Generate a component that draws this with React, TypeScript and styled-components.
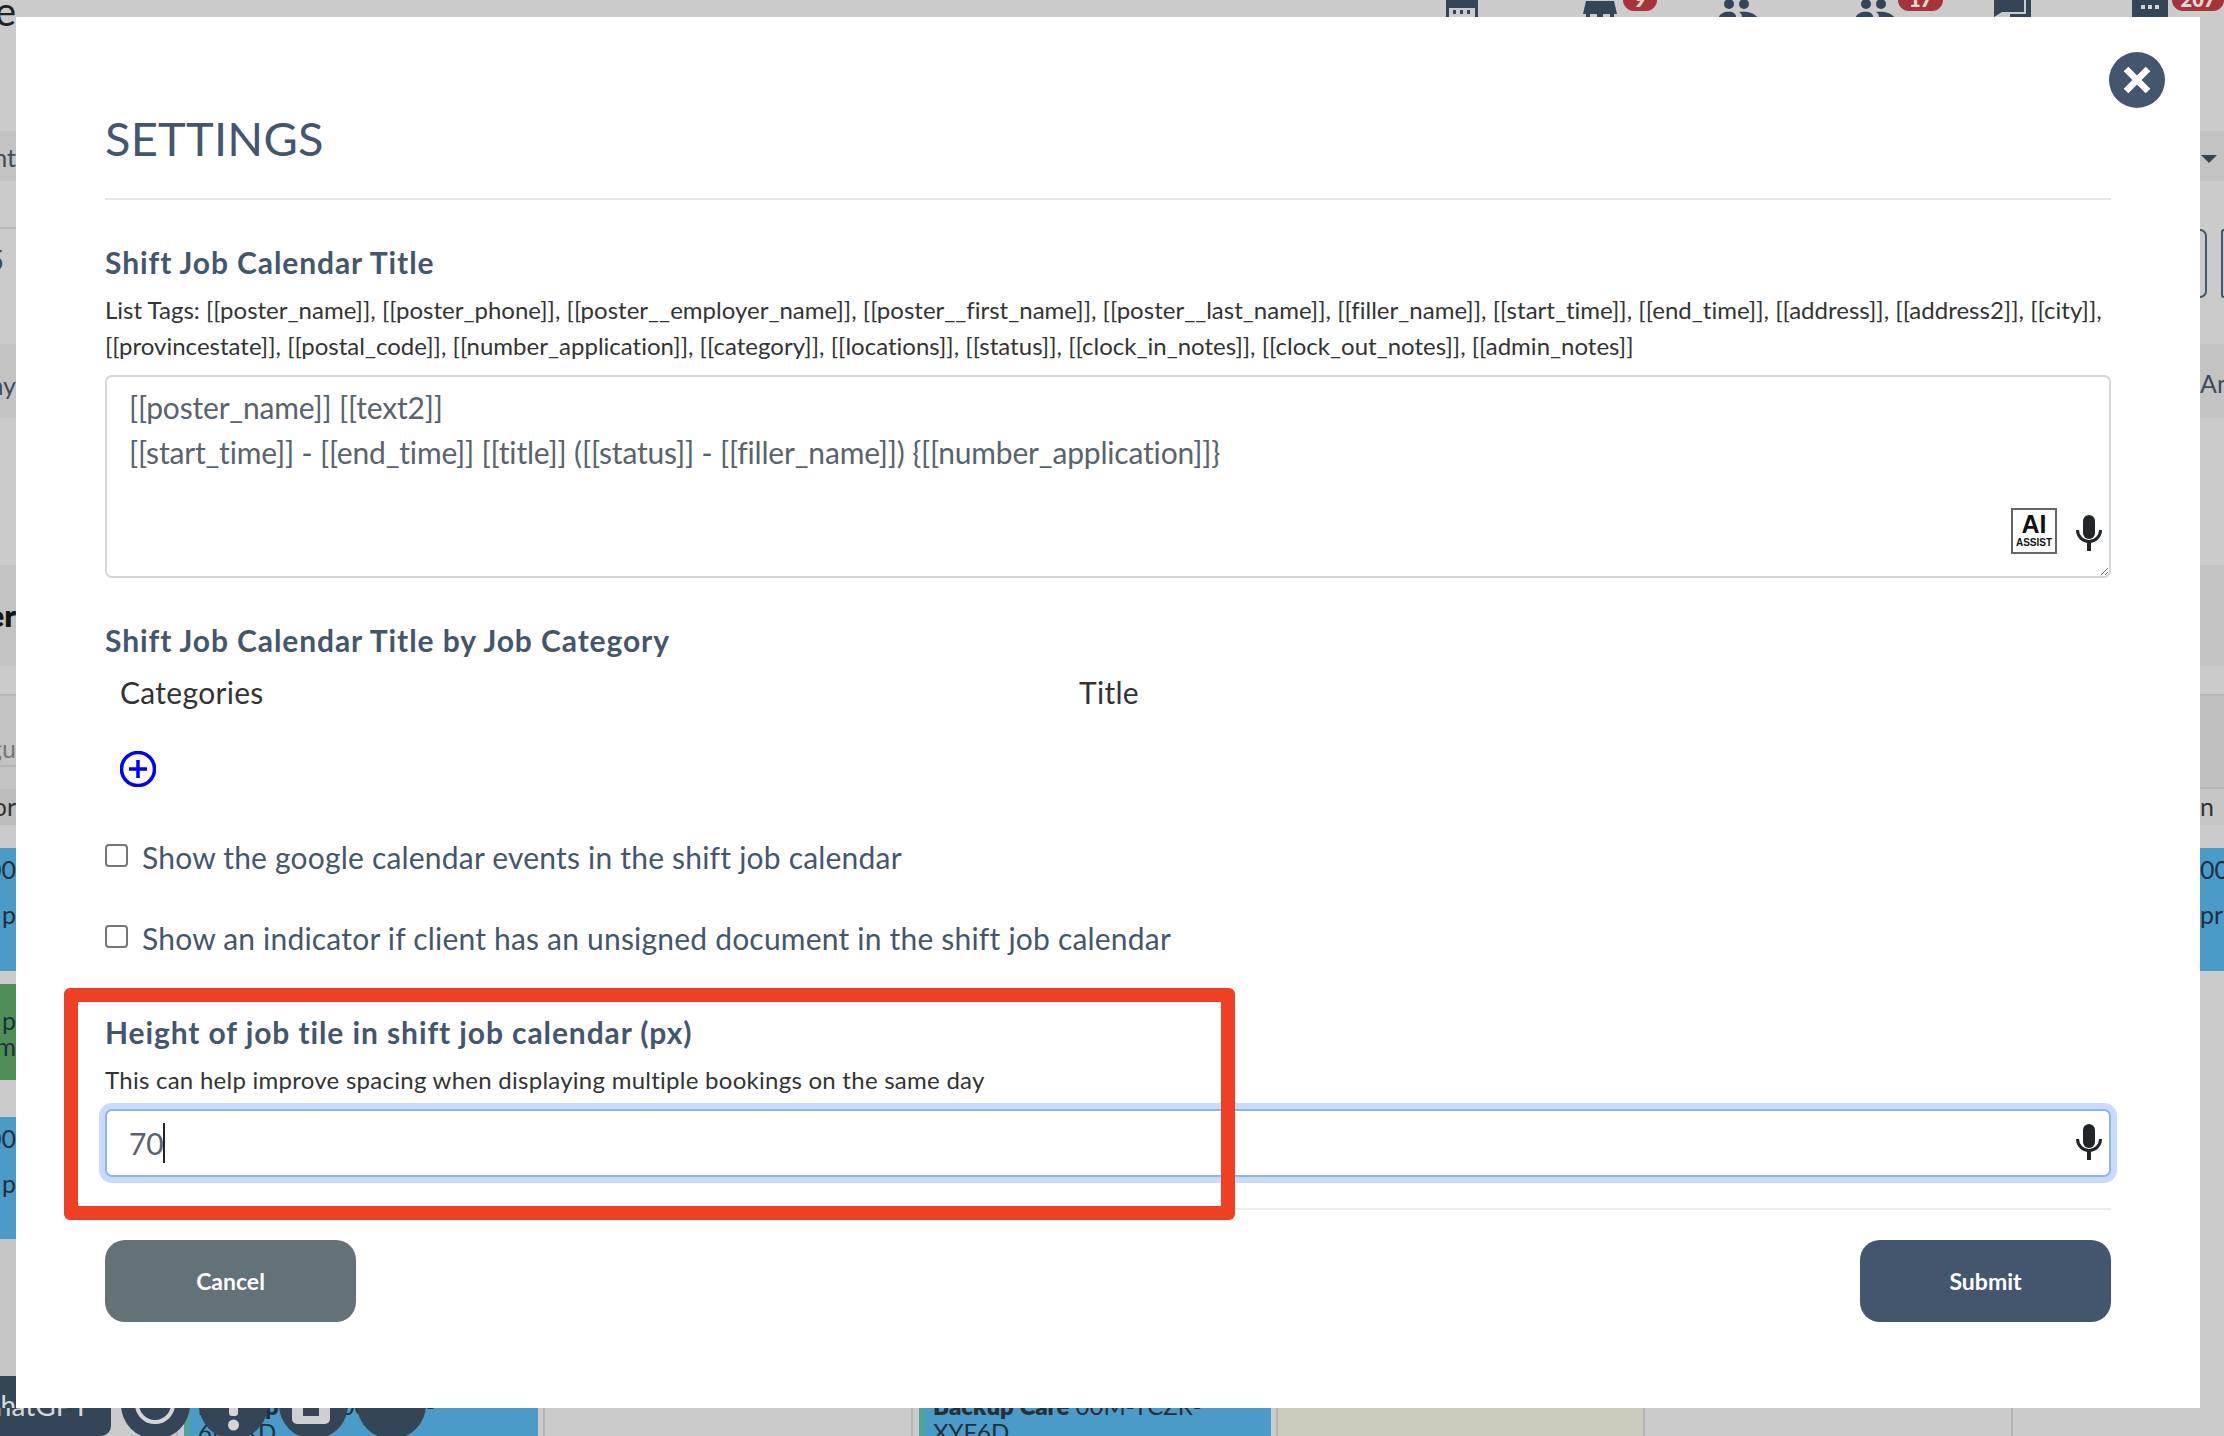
import React from "react";
import styled, { createGlobalStyle } from "styled-components";

const NAVY = "#344558";
const SLATE = "#44566e";
const FONT = `"Lato", "Noto Sans", sans-serif`;

const Global = createGlobalStyle`
  html, body { margin: 0; padding: 0; background: #cbcbcb; }
  * { box-sizing: border-box; }
`;

const Page = styled.div`
  display: grid;
  width: 2224px;
  height: 1436px;
  grid-template-columns: 16px 2184px 24px;
  grid-template-rows: 17px 1391px 28px;
  overflow: hidden;
  background: #cbcbcb;
  font-family: ${FONT};
`;

/* ---------- page behind the dialog ---------- */
const SideStrip = styled.div<{ $first?: boolean }>`
  grid-column: ${(p) => (p.$first ? 1 : 3)};
  grid-row: ${(p) => (p.$first ? "1 / span 2" : 2)};
  display: flex;
  flex-direction: column;
  overflow: hidden;
`;

const Band = styled.div<{ $h: number; $bg?: string; $line?: string; $end?: boolean; $pad?: number }>`
  flex: 0 0 ${(p) => p.$h}px;
  display: flex;
  flex-direction: column;
  align-items: ${(p) => (p.$end ? "flex-end" : "flex-start")};
  padding-top: ${(p) => p.$pad ?? 0}px;
  background: ${(p) => p.$bg ?? "transparent"};
  border-bottom: ${(p) => (p.$line ? `2px solid ${p.$line}` : "none")};
  overflow: hidden;
`;

const Peek = styled.span<{ $size?: number; $color?: string; $bold?: boolean; $lh?: number; $shift?: number }>`
  flex: none;
  white-space: nowrap;
  margin-right: ${(p) => p.$shift ?? 0}px;
  font-size: ${(p) => p.$size ?? 25}px;
  font-weight: ${(p) => (p.$bold ? 800 : 400)};
  line-height: ${(p) => p.$lh ?? 30}px;
  color: ${(p) => p.$color ?? "#3d4c5c"};
`;

const Caret = styled.span`
  width: 0;
  height: 0;
  margin: 24px 0 0 1px;
  border-left: 8px solid transparent;
  border-right: 8px solid transparent;
  border-top: 8px solid ${NAVY};
`;

const GhostRow = styled.div`
  display: flex;
  justify-content: space-between;
  align-self: stretch;
  height: 69px;
`;

const GhostButton = styled.div<{ $open: "left" | "right" }>`
  width: 3px;
  width: ${(p) => (p.$open === "left" ? 7 : 3)}px;
  height: 69px;
  border: 2px solid ${SLATE};
  border-${(p) => p.$open}: none;
  border-radius: ${(p) => (p.$open === "left" ? "0 8px 8px 0" : "8px 0 0 8px")};
`;

const TopStrip = styled.div`
  grid-column: 2 / span 2;
  grid-row: 1;
  display: flex;
  align-items: flex-start;
  overflow: hidden;
`;

const TopIcon = styled.svg<{ $left: number }>`
  flex: none;
  margin-left: ${(p) => p.$left}px;
`;

const Badge = styled.span<{ $w: number; $left: number }>`
  flex: none;
  display: flex;
  align-items: flex-end;
  justify-content: center;
  width: ${(p) => p.$w}px;
  height: 11px;
  margin-left: ${(p) => p.$left}px;
  padding-bottom: 2px;
  border-radius: 0 0 14px 14px;
  background: #a4343a;
  color: #e6d3d3;
  font-size: 20px;
  font-weight: 800;
  line-height: 20px;
  overflow: hidden;
`;

const BottomStrip = styled.div`
  grid-column: 1 / span 3;
  grid-row: 3;
  position: relative;
  display: flex;
  overflow: hidden;
`;

const ChatTab = styled.div`
  flex: 0 0 111px;
  display: flex;
  justify-content: flex-end;
  padding-right: 22px;
  background: ${NAVY};
  border-radius: 0 0 10px 0;
  color: #d5d9de;
  font-size: 28px;
  line-height: 32px;
  white-space: nowrap;
  overflow: hidden;
`;

const ChatText = styled.span`
  flex: none;
  margin-top: -19px;
`;

const DayCell = styled.div<{ $w: number; $bg?: string; $lineLeft?: boolean; $lineRight?: boolean }>`
  flex: ${(p) => (p.$w ? `0 0 ${p.$w}px` : "1")};
  background: ${(p) => p.$bg ?? "#cbcbcb"};
  border-left: ${(p) => (p.$lineLeft ? "2px solid #b4b4b4" : "none")};
  border-right: ${(p) => (p.$lineRight ? "2px solid #b4b4b4" : "none")};
`;

const JobTile = styled.div<{ $w: number }>`
  flex: 0 0 ${(p) => p.$w}px;
  background: #4a9bc7;
  border-left: 6px solid #4fa59c;
  padding-left: 8px;
  color: #20303c;
  font-size: 24px;
  line-height: 26px;
  white-space: nowrap;
  overflow: hidden;
`;

const JobLines = styled.div`
  margin-top: -15px;
`;

const JobName = styled.b`
  font-weight: 800;
`;

const FloatRow = styled.div`
  position: absolute;
  left: 121px;
  top: -38px;
  display: flex;
`;

const FloatButton = styled.svg<{ $left: number }>`
  display: block;
  width: 69px;
  height: 69px;
  margin-left: ${(p) => p.$left}px;
`;

/* ---------- dialog ---------- */
const Modal = styled.div`
  grid-column: 2;
  grid-row: 2;
  position: relative;
  display: flex;
  flex-direction: column;
  padding: 93px 89px 0;
  background: #fff;
  color: #333;
`;

const CloseButton = styled.button`
  position: absolute;
  top: 35px;
  right: 35px;
  width: 56px;
  height: 56px;
  padding: 0;
  border: none;
  border-radius: 50%;
  background: ${SLATE};
  display: grid;
  place-items: center;
`;

const Title = styled.h1`
  margin: 0 0 32px;
  font-size: 47px;
  font-weight: 400;
  line-height: 56px;
  letter-spacing: 0.2px;
  color: ${SLATE};
`;

const Rule = styled.hr<{ $thin?: boolean }>`
  margin: 0;
  border: none;
  height: 2px;
  background: ${(p) => (p.$thin ? "#ececec" : "#e6e6e6")};
`;

const SectionTitle = styled.h2<{ $top: number }>`
  margin: ${(p) => p.$top}px 0 0;
  font-size: 30px;
  font-weight: 700;
  line-height: 40px;
  letter-spacing: 0.9px;
  color: ${SLATE};
  white-space: nowrap;
`;

const TagList = styled.p`
  margin: 10px 0 0;
  font-size: 24px;
  line-height: 35.5px;
  letter-spacing: 0.01px;
  color: #333;
  white-space: nowrap;
`;

const FieldWrap = styled.div<{ $top: number }>`
  position: relative;
  margin-top: ${(p) => p.$top}px;
`;

const Area = styled.textarea`
  display: block;
  width: 100%;
  height: 203px;
  padding: 8px 22px;
  border: 2px solid #d3d8dd;
  border-radius: 7px;
  background: #fff;
  font-family: ${FONT};
  font-size: 30px;
  line-height: 45px;
  letter-spacing: -0.18px;
  color: #59636d;
  outline: none;
  resize: both;
`;

const AiBadge = styled.div`
  position: absolute;
  right: 54px;
  bottom: 24px;
  width: 46px;
  height: 46px;
  display: flex;
  flex-direction: column;
  align-items: center;
  border: 2px solid #666;
  color: #111;
  font-family: "Liberation Sans", Arial, sans-serif;
  font-weight: 700;
`;

const AiBig = styled.span`
  font-size: 25px;
  line-height: 24px;
  margin-top: 2px;
`;

const AiSmall = styled.span`
  font-size: 10px;
  line-height: 11px;
  margin-top: 1px;
`;

const MicSlot = styled.svg<{ $bottom: number }>`
  position: absolute;
  right: 9px;
  bottom: ${(p) => p.$bottom}px;
`;

const TableHead = styled.div`
  display: grid;
  grid-template-columns: 959px 1fr;
  margin-top: 12px;
  padding-left: 15px;
  font-size: 30px;
  line-height: 40px;
  letter-spacing: 0.3px;
  color: #333;
`;

const AddButton = styled.svg`
  display: block;
  margin: 39px 0 0 15px;
`;

const CheckRow = styled.label<{ $top: number }>`
  display: flex;
  align-items: center;
  gap: 14px;
  height: 40px;
  margin-top: ${(p) => p.$top}px;
  font-size: 30px;
  letter-spacing: 0.2px;
  color: ${SLATE};
  white-space: nowrap;
`;

const CheckBox = styled.span`
  flex: none;
  width: 23px;
  height: 23px;
  margin-top: -3px;
  border: 2px solid #767676;
  border-radius: 4px;
  background: #fff;
`;

const Hint = styled.p`
  margin: 10px 0 0;
  font-size: 24px;
  line-height: 36px;
  letter-spacing: 0.26px;
  color: #333;
  white-space: nowrap;
`;

const NumberInput = styled.input`
  display: block;
  width: 100%;
  height: 68px;
  padding: 0 22px;
  border: 2px solid #8ab5f5;
  border-radius: 7px;
  box-shadow: 0 0 0 6px #c9dbfd;
  background: #fff;
  font-family: ${FONT};
  font-size: 30px;
  letter-spacing: -0.2px;
  color: #59636d;
  outline: none;
`;

const TextCaret = styled.span`
  position: absolute;
  left: 58px;
  top: 14px;
  width: 2px;
  height: 40px;
  background: #222;
`;

const Actions = styled.div`
  display: flex;
  justify-content: space-between;
  margin-top: 30px;
`;

const ActionButton = styled.button<{ $tone: string }>`
  width: 251px;
  height: 82px;
  padding: 0;
  border: none;
  border-radius: 20px;
  background: ${(p) => p.$tone};
  color: #fff;
  font-family: ${FONT};
  font-size: 23px;
  font-weight: 700;
`;

const Highlight = styled.div`
  position: absolute;
  left: 48px;
  top: 971px;
  width: 1171px;
  height: 232px;
  border: 14px solid #f04023;
  border-radius: 6px;
  pointer-events: none;
`;

const Mic = ({ bottom }: { bottom: number }) => (
  <MicSlot $bottom={bottom} width="26" height="36" viewBox="0 0 26 36">
    <rect x="7" y="0" width="12" height="24" rx="6" fill="#212529" />
    <path d="M1.5 15a11.5 11.5 0 0 0 23 0" fill="none" stroke="#212529" strokeWidth="3" />
    <rect x="11" y="27" width="4" height="9" fill="#212529" />
  </MicSlot>
);

const People = ({ left }: { left: number }) => (
  <TopIcon $left={left} width="40" height="17" viewBox="0 0 40 17">
    <ellipse cx="11" cy="4" rx="5" ry="5" fill={NAVY} />
    <ellipse cx="26" cy="4" rx="5" ry="5" fill={NAVY} />
    <path d="M1 17c1-4 7-6 13-5 3 1 4 3 4 5zM21 12c6-1 15 0 18 5H24c0-2-1-4-3-5z" fill={NAVY} />
  </TopIcon>
);

export default function App() {
  return (
    <Page>
      <Global />

      <SideStrip $first>
        <Band $h={131} $end>
          <Peek $size={40} $color="#222" $lh={22}>e</Peek>
        </Band>
        <Band $h={50} $bg="#c3c3c3" $end $pad={11}><Peek>nt</Peek></Band>
        <Band $h={48} $line="#b6b6b6" />
        <Band $h={70} $end $pad={16}><Peek $size={28} $shift={12}>5</Peek></Band>
        <Band $h={45} />
        <Band $h={74} $bg="#c3c3c3" $end $pad={26}><Peek>ay</Peek></Band>
        <Band $h={147} />
        <Band $h={101} $bg="#c3c3c3" $end $pad={35}><Peek $size={31} $bold $color="#151515">er</Peek></Band>
        <Band $h={30} $line="#b6b6b6" />
        <Band $h={71} $bg="#c3c3c3" $line="#b6b6b6" $end $pad={37}><Peek $color="#777">gu</Peek></Band>
        <Band $h={22} $bg="#c3c3c3" />
        <Band $h={36} $bg="#bdbdbd" $end $pad={2}><Peek $color="#333">or</Peek></Band>
        <Band $h={23} />
        <Band $h={123} $bg="#4a9bc7" $end $pad={6}>
          <Peek $color="#20303c">00</Peek>
          <Peek $color="#20303c" $lh={60}>p</Peek>
        </Band>
        <Band $h={13} />
        <Band $h={96} $bg="#4d8f57" $end $pad={23}>
          <Peek $color="#20303c" $lh={26}>p</Peek>
          <Peek $color="#20303c" $lh={26}>m</Peek>
        </Band>
        <Band $h={37} />
        <Band $h={122} $bg="#4a9bc7" $end $pad={6}>
          <Peek $color="#20303c">00</Peek>
          <Peek $color="#20303c" $lh={60}>p</Peek>
        </Band>
        <Band $h={137} $bg="#c6c6c6" />
        <Band $h={32} $bg={NAVY} $end $pad={13}>
          <Peek $size={28} $color="#d5d9de" $lh={32}>h</Peek>
        </Band>
      </SideStrip>

      <TopStrip>
        <TopIcon $left={1430} width="32" height="17" viewBox="0 0 32 17">
          <rect x="0" y="-2" width="32" height="19" fill={NAVY} />
          <rect x="3" y="8" width="26" height="9" fill="#cbcbcb" />
          <rect x="7" y="10" width="3" height="4" fill={NAVY} />
          <rect x="14" y="10" width="3" height="4" fill={NAVY} />
          <rect x="21" y="10" width="3" height="4" fill={NAVY} />
        </TopIcon>
        <TopIcon $left={105} width="34" height="17" viewBox="0 0 34 17">
          <path d="M3 1h28l3 13H31v3h-4v-3h-7v3h-6v-3H7v3H3v-3H0z" fill={NAVY} />
        </TopIcon>
        <Badge $w={34} $left={6}>9</Badge>
        <People left={61} />
        <People left={97} />
        <Badge $w={45} $left={3}>17</Badge>
        <TopIcon $left={51} width="37" height="17" viewBox="0 0 37 17">
          <path d="M0 0h30v12H8l-8 5z" fill={NAVY} />
          <path d="M32 0h5v17H16v-3h16z" fill={NAVY} />
        </TopIcon>
        <TopIcon $left={101} width="36" height="17" viewBox="0 0 36 17">
          <rect width="36" height="17" fill={NAVY} />
          <rect x="9" y="5" width="4" height="4" fill="#d5d5d5" />
          <rect x="16" y="5" width="4" height="4" fill="#d5d5d5" />
          <rect x="23" y="5" width="4" height="4" fill="#d5d5d5" />
        </TopIcon>
        <Badge $w={52} $left={4}>207</Badge>
      </TopStrip>

      <Modal>
        <CloseButton aria-label="Close">
          <svg width="28" height="28" viewBox="0 0 28 28">
            <path d="M3 3l22 22M25 3L3 25" stroke="#fff" strokeWidth="6.5" fill="none" />
          </svg>
        </CloseButton>

        <Title>SETTINGS</Title>
        <Rule />

        <SectionTitle $top={42}>Shift Job Calendar Title</SectionTitle>
        <TagList>
          List Tags: [[poster_name]], [[poster_phone]], [[poster__employer_name]], [[poster__first_name]], [[poster__last_name]], [[filler_name]], [[start_time]], [[end_time]], [[address]], [[address2]], [[city]],
          <br />
          [[provincestate]], [[postal_code]], [[number_application]], [[category]], [[locations]], [[status]], [[clock_in_notes]], [[clock_out_notes]], [[admin_notes]]
        </TagList>
        <FieldWrap $top={11.5}>
          <Area
            readOnly
            defaultValue={"[[poster_name]] [[text2]]\n[[start_time]] - [[end_time]] [[title]] ([[status]] - [[filler_name]]) {[[number_application]]}"}
          />
          <AiBadge>
            <AiBig>AI</AiBig>
            <AiSmall>ASSIST</AiSmall>
          </AiBadge>
          <Mic bottom={27} />
        </FieldWrap>

        <SectionTitle $top={42}>Shift Job Calendar Title by Job Category</SectionTitle>
        <TableHead>
          <span>Categories</span>
          <span>Title</span>
        </TableHead>
        <AddButton width="36" height="36" viewBox="0 0 36 36">
          <circle cx="18" cy="18" r="16.5" fill="none" stroke="#0000ff" strokeWidth="3.5" />
          <path d="M18 9v18M9 18h18" stroke="#0000ff" strokeWidth="3.5" fill="none" />
        </AddButton>

        <CheckRow $top={50}>
          <CheckBox />
          Show the google calendar events in the shift job calendar
        </CheckRow>
        <CheckRow $top={41}>
          <CheckBox />
          Show an indicator if client has an unsigned document in the shift job calendar
        </CheckRow>

        <SectionTitle $top={54}>Height of job tile in shift job calendar (px)</SectionTitle>
        <Hint>This can help improve spacing when displaying multiple bookings on the same day</Hint>
        <FieldWrap $top={11}>
          <NumberInput readOnly defaultValue="70" />
          <TextCaret />
          <Mic bottom={17} />
        </FieldWrap>

        <FieldWrap $top={31}>
          <Rule $thin />
        </FieldWrap>

        <Actions>
          <ActionButton $tone="#637277">Cancel</ActionButton>
          <ActionButton $tone={SLATE}>Submit</ActionButton>
        </Actions>

        <Highlight />
      </Modal>

      <SideStrip>
        <Band $h={114} />
        <Band $h={50} $bg="#c3c3c3"><Caret /></Band>
        <Band $h={48} />
        <Band $h={70}>
          <GhostRow>
            <GhostButton $open="left" />
            <GhostButton $open="right" />
          </GhostRow>
        </Band>
        <Band $h={45} />
        <Band $h={74} $bg="#c3c3c3" $pad={24}><Peek>An</Peek></Band>
        <Band $h={147} />
        <Band $h={101} $bg="#c3c3c3" />
        <Band $h={30} $line="#b6b6b6" />
        <Band $h={93} $bg="#c0c0c0" $line="#b6b6b6" />
        <Band $h={36} $bg="#c6c6c6" $pad={2}><Peek $color="#333">n</Peek></Band>
        <Band $h={23} />
        <Band $h={123} $bg="#4a9bc7" $pad={6}>
          <Peek $color="#20303c">00</Peek>
          <Peek $color="#20303c" $lh={60}>pr</Peek>
        </Band>
      </SideStrip>

      <BottomStrip>
        <ChatTab><ChatText>hatGPT</ChatText></ChatTab>
        <DayCell $w={67} $lineRight />
        <DayCell $w={6} />
        <JobTile $w={354}>
          <JobLines>
            <JobName>Backup Care</JobName> 00M-L7-
            <br />
            6M-XD
          </JobLines>
        </JobTile>
        <DayCell $w={7} $lineRight />
        <DayCell $w={368} $lineRight />
        <DayCell $w={6} />
        <JobTile $w={352}>
          <JobLines>
            <JobName>Backup Care</JobName> 00M-YCZR-
            <br />
            XYF6D
          </JobLines>
        </JobTile>
        <DayCell $w={7} $lineRight />
        <DayCell $w={365} $bg="#cbcbbe" />
        <DayCell $w={368} $lineLeft />
        <DayCell $w={0} $lineLeft />
        <FloatRow>
          <FloatButton $left={0} viewBox="0 0 69 69">
            <circle cx="34.5" cy="34.5" r="34.5" fill={NAVY} />
            <path d="M16 34a18 18 0 1 0 36 0" fill="none" stroke="#d5d5d5" strokeWidth="4" />
          </FloatButton>
          <FloatButton $left={9} viewBox="0 0 69 69">
            <circle cx="34.5" cy="34.5" r="34.5" fill={NAVY} />
            <rect x="30" y="20" width="9" height="26" rx="3" fill="#d5d5d5" />
            <circle cx="34.5" cy="55" r="5.5" fill="#d5d5d5" />
          </FloatButton>
          <FloatButton $left={11} viewBox="0 0 69 69">
            <circle cx="34.5" cy="34.5" r="34.5" fill={NAVY} />
            <rect x="13" y="18" width="38" height="36" rx="5" fill="#cfcfcf" />
            <rect x="24" y="18" width="16" height="28" fill={NAVY} />
          </FloatButton>
          <FloatButton $left={9} viewBox="0 0 69 69">
            <circle cx="34.5" cy="34.5" r="34.5" fill={NAVY} />
          </FloatButton>
        </FloatRow>
      </BottomStrip>
    </Page>
  );
}
